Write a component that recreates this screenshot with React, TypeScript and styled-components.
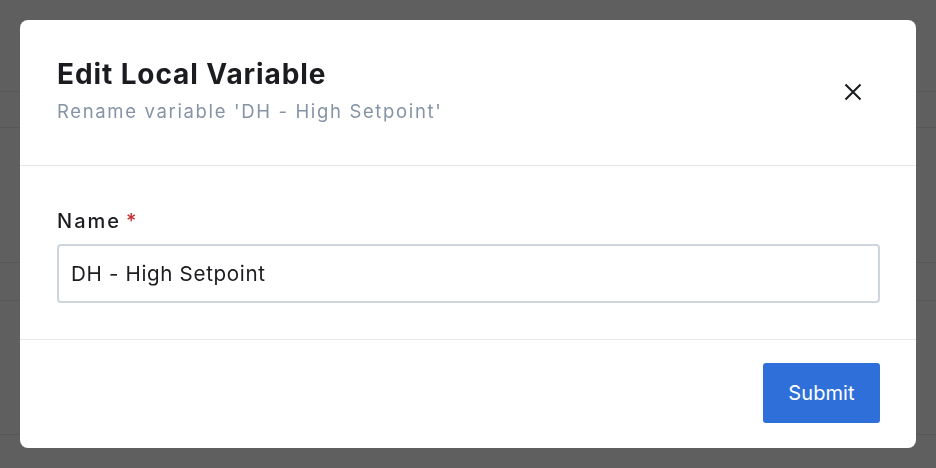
import * as React from 'react';
import styled, { createGlobalStyle } from 'styled-components';

const backgroundRows = [92, 36, 135, 38, 134, 40];

const GlobalStyle = createGlobalStyle`
  html, body {
    margin: 0;
    padding: 0;
    background: #ffffff;
    font-family: Inter, "Noto Sans", sans-serif;
  }
`;

const Page = styled.div`
  width: 936px;
  height: 468px;
  overflow: hidden;
  display: flex;
  flex-direction: column;
`;

const PageRow = styled.div<{ $height: number }>`
  flex: 0 0 ${(p) => p.$height}px;
  box-sizing: border-box;
  border-bottom: 1px solid #e6e8ec;
`;

const Backdrop = styled.div`
  position: fixed;
  inset: 0;
  background: rgba(0, 0, 0, 0.627);
  display: flex;
  padding: 20px;
  box-sizing: border-box;
`;

const Modal = styled.div`
  flex: 1;
  background: #ffffff;
  border-radius: 8px;
  display: flex;
  flex-direction: column;
  overflow: hidden;
`;

const Header = styled.header`
  display: flex;
  align-items: flex-start;
  justify-content: space-between;
  padding: 36px 54px 0 37px;
  height: 146px;
  box-sizing: border-box;
  border-bottom: 1px solid #e4e7eb;
`;

const TitleBlock = styled.div`
  display: flex;
  flex-direction: column;
  gap: 6px;
`;

const Title = styled.h2`
  margin: 0;
  font-size: 28px;
  line-height: 36px;
  font-weight: 700;
  letter-spacing: 0.9px;
  color: #1b1c1f;
`;

const Subtitle = styled.p`
  margin: 0;
  font-size: 18.5px;
  line-height: 26px;
  letter-spacing: 1.65px;
  color: #8693a5;
`;

const CloseButton = styled.button`
  margin-top: 27px;
  width: 18px;
  height: 18px;
  padding: 0;
  border: none;
  background: none;
  display: flex;
  align-items: center;
  justify-content: center;
  cursor: pointer;
  color: #1b1c1f;
`;

const Body = styled.div`
  padding: 43px 36px 36px 37px;
  display: flex;
  flex-direction: column;
  gap: 11px;
  border-bottom: 1px solid #e4e7eb;
`;

const Label = styled.label`
  font-size: 20px;
  line-height: 24px;
  font-weight: 500;
  letter-spacing: 2px;
  color: #1b1c1f;
`;

const Required = styled.span`
  color: #c53030;
  margin-left: 5px;
  letter-spacing: 0;
`;

const Input = styled.input`
  height: 59px;
  box-sizing: border-box;
  border: 2px solid #cfd5dc;
  border-radius: 4px;
  padding: 0 12px;
  font-family: Inter, "Noto Sans", sans-serif;
  font-size: 20.6px;
  letter-spacing: 0.65px;
  color: #1b1c1f;
  outline: none;
`;

const Footer = styled.footer`
  flex: 1;
  display: flex;
  justify-content: flex-end;
  align-items: flex-start;
  padding: 23px 36px 0;
`;

const SubmitButton = styled.button`
  width: 117px;
  height: 60px;
  border: none;
  border-radius: 3px;
  background: #2f6fd9;
  color: #ffffff;
  font-family: Inter, "Noto Sans", sans-serif;
  font-size: 20px;
  letter-spacing: 0.1px;
  cursor: pointer;
`;

const CloseIcon = () => (
  <svg width="18" height="18" viewBox="0 0 18 18" fill="none">
    <path d="M1.5 1.5L16.5 16.5M16.5 1.5L1.5 16.5" stroke="currentColor" strokeWidth="2.1" />
  </svg>
);

const App = () => (
  <>
    <GlobalStyle />
    <Page>
      {backgroundRows.map((h, i) => (
        <PageRow key={i} $height={h} />
      ))}
    </Page>
    <Backdrop>
      <Modal>
        <Header>
          <TitleBlock>
            <Title>Edit Local Variable</Title>
            <Subtitle>Rename variable 'DH - High Setpoint'</Subtitle>
          </TitleBlock>
          <CloseButton aria-label="Close">
            <CloseIcon />
          </CloseButton>
        </Header>
        <Body>
          <Label htmlFor="name">
            Name<Required>*</Required>
          </Label>
          <Input id="name" defaultValue="DH - High Setpoint" />
        </Body>
        <Footer>
          <SubmitButton>Submit</SubmitButton>
        </Footer>
      </Modal>
    </Backdrop>
  </>
);

export default App;
